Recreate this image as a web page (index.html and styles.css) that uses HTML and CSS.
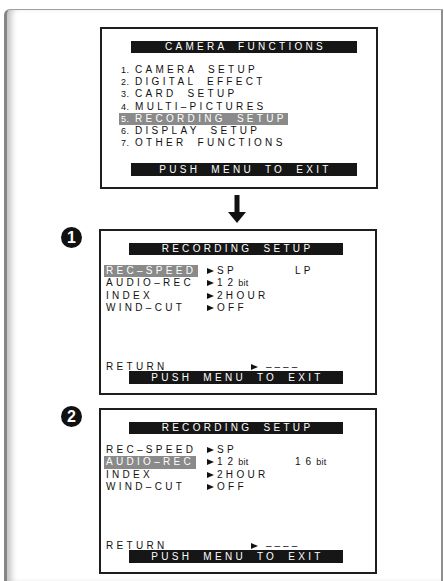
FILE: index.html
```html
<!DOCTYPE html>
<html lang="en">
<head>
    <meta charset="UTF-8">
    <meta name="viewport" content="width=device-width, initial-scale=1.0">
    <title>Recording Setup</title>
    <link rel="stylesheet" href="styles.css">
</head>
<body>
    <div class="sheet">
        <!-- Top menu -->
        <div class="screen screen-main">
            <div class="bar title">CAMERA FUNCTIONS</div>
            <ol class="menu">
                <li><span class="num">1.</span>CAMERA SETUP</li>
                <li><span class="num">2.</span>DIGITAL EFFECT</li>
                <li><span class="num">3.</span>CARD SETUP</li>
                <li><span class="num">4.</span>MULTI–PICTURES</li>
                <li class="sel"><span class="num">5.</span>RECORDING SETUP</li>
                <li><span class="num">6.</span>DISPLAY SETUP</li>
                <li><span class="num">7.</span>OTHER FUNCTIONS</li>
            </ol>
            <div class="bar exit">PUSH MENU TO EXIT</div>
        </div>

        <div class="arrow">
            <svg width="18" height="28" viewBox="0 0 18 28">
                <rect x="6.5" y="0" width="5" height="18" fill="#111"/>
                <polygon points="0,17 18,17 9,28" fill="#111"/>
            </svg>
        </div>

        <!-- Step 1 -->
        <div class="step">
            <div class="badge">1</div>
            <div class="screen screen-sub">
                <div class="bar title title-sub">RECORDING SETUP</div>
                <div class="settings">
                    <span class="label sel">REC–SPEED</span>
                    <span class="val"><i class="tri"></i>SP</span>
                    <span class="opt">LP</span>

                    <span class="label">AUDIO–REC</span>
                    <span class="val"><i class="tri"></i><span class="digits">12</span><span class="bit">bit</span></span>
                    <span class="opt"></span>

                    <span class="label">INDEX</span>
                    <span class="val"><i class="tri"></i>2HOUR</span>
                    <span class="opt"></span>

                    <span class="label">WIND–CUT</span>
                    <span class="val"><i class="tri"></i>OFF</span>
                    <span class="opt"></span>
                </div>
                <div class="return">
                    <span>RETURN</span>
                    <span><i class="tri"></i><span class="dashes">––––</span></span>
                </div>
                <div class="bar exit exit-sub">PUSH MENU TO EXIT</div>
            </div>
        </div>

        <!-- Step 2 -->
        <div class="step">
            <div class="badge">2</div>
            <div class="screen screen-sub">
                <div class="bar title title-sub">RECORDING SETUP</div>
                <div class="settings">
                    <span class="label">REC–SPEED</span>
                    <span class="val"><i class="tri"></i>SP</span>
                    <span class="opt"></span>

                    <span class="label sel">AUDIO–REC</span>
                    <span class="val"><i class="tri"></i><span class="digits">12</span><span class="bit">bit</span></span>
                    <span class="opt"><span class="digits">16</span><span class="bit">bit</span></span>

                    <span class="label">INDEX</span>
                    <span class="val"><i class="tri"></i>2HOUR</span>
                    <span class="opt"></span>

                    <span class="label">WIND–CUT</span>
                    <span class="val"><i class="tri"></i>OFF</span>
                    <span class="opt"></span>
                </div>
                <div class="return">
                    <span>RETURN</span>
                    <span><i class="tri"></i><span class="dashes">––––</span></span>
                </div>
                <div class="bar exit exit-sub">PUSH MENU TO EXIT</div>
            </div>
        </div>
    </div>
</body>
</html>
```

FILE: styles.css
```css
body {
    margin: 0;
    background-color: #fff;
    font-family: "Liberation Sans", Arial, sans-serif;
    color: #111;
}

/* page frame with the shaded left edge, open at the bottom */
.sheet {
    margin: 9px 1px 0 4px;
    height: 554px;
    padding-top: 17px;
    border-top: 1px solid #a0a0a0;
    border-left: 3px solid #858585;
    border-right: 2px solid #8f8f8f;
    border-top-left-radius: 6px;
    box-shadow: inset 7px 0 6px -3px rgba(0, 0, 0, 0.25);
}

.screen {
    box-sizing: border-box;
    width: 278px;
    border: 2px solid #1e1e1e;
    display: flex;
    flex-direction: column;
}

.screen-main {
    margin-left: 93px;
    height: 162px;
}

.screen-sub {
    margin-left: 17px;
    height: 166px;
}

.bar {
    background-color: #161616;
    color: #fff;
    font-size: 10px;
    letter-spacing: 3.3px;
    word-spacing: 5px;
    text-align: center;
    padding-left: 3px;
    box-sizing: border-box;
}

.title {
    margin: 12px 0 0 29px;
    width: 226px;
    height: 12px;
    line-height: 12px;
}

.exit {
    margin: auto 0 11px 29px;
    width: 226px;
    height: 13px;
    line-height: 13px;
}

.title-sub {
    margin-left: 28px;
    width: 214px;
}

.exit-sub {
    margin: 0 0 9px 28px;
    width: 214px;
}

.menu {
    list-style: none;
    margin: 11px 0 0 17px;
    padding: 0;
    font-size: 10px;
    line-height: 11.2px;
    letter-spacing: 3.3px;
    word-spacing: 5px;
}

.menu li {
    width: fit-content;
    padding: 0 1px 0 2px;
}

.num {
    display: inline-block;
    width: 14px;
    font-size: 9px;
    letter-spacing: 0.5px;
}

.sel {
    background-color: #8a8a8a;
    color: #fff;
}

.arrow {
    margin: 6px 0 6px 221px;
    height: 28px;
}

.arrow svg {
    display: block;
}

.step {
    display: flex;
    align-items: flex-start;
}

.step + .step {
    margin-top: 13px;
}

.badge {
    margin: -2px 0 0 54px;
    width: 21px;
    height: 21px;
    border-radius: 50%;
    background-color: #111;
    color: #fff;
    font-size: 16px;
    font-weight: bold;
    line-height: 21px;
    text-align: center;
}

.settings {
    display: grid;
    grid-template-columns: 103px 88px auto;
    margin: 10px 0 0 3px;
    font-size: 10px;
    line-height: 12.3px;
    letter-spacing: 3.3px;
    word-spacing: 5px;
}

.label {
    justify-self: start;
    padding: 0 2px 0 2px;
}

.tri {
    display: inline-block;
    width: 0;
    height: 0;
    margin-right: 3px;
    border-left: 7px solid #111;
    border-top: 3.5px solid transparent;
    border-bottom: 3.5px solid transparent;
}

.digits {
    letter-spacing: 5px;
}

.bit {
    font-size: 9px;
    letter-spacing: 0.3px;
}

.dashes {
    margin-left: 5px;
    letter-spacing: 3px;
}

.return {
    display: grid;
    grid-template-columns: 145px auto;
    margin: auto 0 0 5px;
    font-size: 10px;
    line-height: 9px;
    letter-spacing: 3.3px;
}
```
